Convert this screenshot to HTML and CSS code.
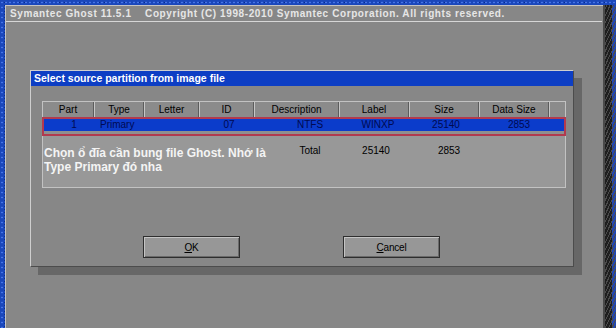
FILE: index.html
```html
<!DOCTYPE html>
<html lang="vi">
<head>
    <meta charset="UTF-8">
    <title>Symantec Ghost 11.5.1</title>
    <link rel="stylesheet" href="styles.css">
</head>
<body>
    <div class="desk">
        <div class="ghost">
            <div class="ghost-title">Symantec Ghost 11.5.1    Copyright (C) 1998-2010 Symantec Corporation. All rights reserved.</div>
            <div class="ghost-body">
                <div class="dialog">
                    <div class="dialog-title">Select source partition from image file</div>

                    <div class="part-table">
                        <div class="thead">
                            <div class="th">Part</div>
                            <div class="th">Type</div>
                            <div class="th">Letter</div>
                            <div class="th">ID</div>
                            <div class="th">Description</div>
                            <div class="th">Label</div>
                            <div class="th">Size</div>
                            <div class="th">Data Size</div>
                            <div class="th"></div>
                        </div>

                        <div class="selected">
                            <div class="row">
                                <span class="c-part">1</span>
                                <span class="c-type">Primary</span>
                                <span></span>
                                <span class="c-id">07</span>
                                <span class="c-desc">NTFS</span>
                                <span class="c-label">WINXP</span>
                                <span class="c-size">25140</span>
                                <span class="c-data">2853</span>
                            </div>
                        </div>

                        <div class="tbody">
                            <div class="note">Chọn ổ đĩa cần bung file Ghost. Nhớ là<br>Type Primary đó nha</div>
                            <span class="t-total">Total</span>
                            <span class="t-size">25140</span>
                            <span class="t-data">2853</span>
                        </div>
                    </div>

                    <div class="buttons">
                        <button class="btn"><u>O</u>K</button>
                        <button class="btn"><u>C</u>ancel</button>
                    </div>
                </div>
            </div>
        </div>
        <div class="edge"></div>
    </div>
</body>
</html>
```

FILE: styles.css
```css
html, body {
    margin: 0;
    height: 100%;
}

body {
    overflow: hidden;
    font-family: "Liberation Sans", Arial, sans-serif;
    background-color: #1a47bb;
    background-image:
        radial-gradient(#4774e6 0.6px, transparent 1px),
        radial-gradient(#0b2d8a 0.6px, transparent 1px);
    background-size: 4px 5px, 5px 3px;
    background-position: 0 0, 2px 1px;
}

.desk {
    display: flex;
    height: 100%;
    padding: 5px 0 0 5px;
    box-sizing: border-box;
}

/* main ghost window */
.ghost {
    width: 598px;
    box-sizing: border-box;
    background: #878787;
    border-left: 1px solid #c4c4c4;
    border-top: 1px solid #c4c4c4;
    display: flex;
    flex-direction: column;
}

.ghost-title {
    height: 15px;
    line-height: 15px;
    padding-left: 4px;
    margin-right: 1px;
    font-size: 10px;
    font-weight: bold;
    letter-spacing: 0.6px;
    color: #e6e6e6;
    white-space: pre;
    border-bottom: 1px solid #d6d6d6;
}

.ghost-body {
    padding: 48px 0 0 24px;
}

.edge {
    flex: 1;
    background-color: #262626;
    background-image:
        repeating-linear-gradient(115deg, #4c4c4c 0 1px, transparent 1px 3px),
        linear-gradient(90deg, #4a4a4a 0 2px, #1e1e1e 2px 9px, #2246b0 9px);
}

/* dialog */
.dialog {
    width: 544px;
    height: 197px;
    box-sizing: border-box;
    border: 1px solid;
    border-color: #cfcfcf #4c4c4c #4c4c4c #cfcfcf;
    box-shadow: 8px 8px 0 #676767;
    background: #878787;
}

.dialog-title {
    height: 15px;
    line-height: 15px;
    padding-left: 3px;
    background: #0d3ec4;
    color: #fff;
    font-size: 10.5px;
    font-weight: bold;
}

.part-table {
    margin: 15px 7px 0 11px;
    border: 1px solid #c2c2c2;
    background: #989898;
}

.thead {
    display: grid;
    grid-template-columns: 51px 50px 55px 55px 85px 70px 70px 70px 1fr;
    height: 15px;
    background: #8b8b8b;
}

.th {
    font-size: 10px;
    line-height: 15px;
    text-align: center;
    color: #000;
    border-right: 1px solid #5c5c5c;
}

.th + .th {
    border-left: 1px solid #c6c6c6;
}

.th:last-child {
    border-right: none;
}

.selected {
    margin: 0 -1px;
    border: 2px solid #b23a4e;
    padding-bottom: 3px;
    background: #8f8f8f;
}

.row {
    display: grid;
    grid-template-columns: 50px 50px 55px 55px 85px 70px 70px 70px 1fr;
    height: 12px;
    background: #0b3ccb;
    color: #000a52;
    font-size: 10px;
    line-height: 12px;
    text-align: center;
}

.c-part { padding-left: 10px; }
.c-type { text-align: left; padding-left: 6px; }
.c-id { padding-left: 5px; }
.c-desc { padding-left: 27px; }
.c-label { padding-left: 8px; }
.c-size { padding-left: 4px; }
.c-data { padding-left: 10px; }

.tbody {
    display: grid;
    grid-template-columns: 51px 50px 55px 55px 85px 70px 70px 70px 1fr;
    height: 51px;
    box-sizing: border-box;
    padding-top: 8px;
    font-size: 10px;
    line-height: 14px;
    text-align: center;
    color: #000;
}

.note {
    grid-column: 1 / 5;
    margin-top: 2px;
    padding-left: 1px;
    text-align: left;
    white-space: nowrap;
    font-size: 12px;
    font-weight: bold;
    color: #f4f4f4;
}

.t-total { padding-left: 27px; }
.t-size { padding-left: 4px; }
.t-data { padding-left: 10px; }

/* buttons */
.buttons {
    display: flex;
    gap: 103px;
    margin-top: 48px;
    padding-left: 112px;
}

.btn {
    width: 97px;
    height: 22px;
    padding: 0;
    background: #979797;
    border: 1px solid #2e2e2e;
    box-shadow: inset 1px 1px 0 #c4c4c4, inset -1px -1px 0 #6a6a6a;
    font-family: "Liberation Sans", sans-serif;
    font-size: 10px;
    letter-spacing: -0.2px;
    color: #000;
}
```
